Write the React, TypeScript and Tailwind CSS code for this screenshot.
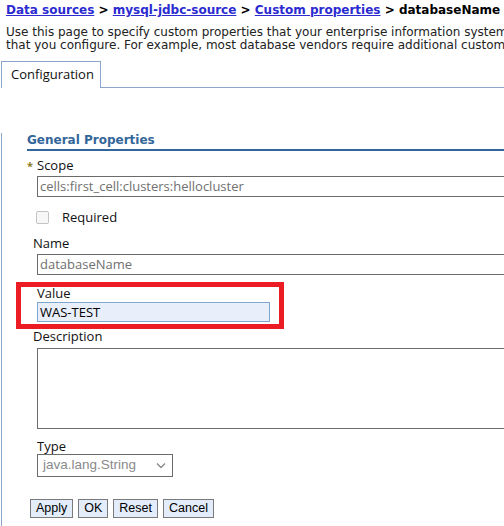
const verdana = "font-['DejaVu_Sans',Verdana,sans-serif]";
const segoe = "font-['Open_Sans','Noto_Sans',sans-serif]";
const arial = "font-['Liberation_Sans',Arial,sans-serif]";

const crumbs = ["Data sources", "mysql-jdbc-source", "Custom properties"];

const Label = ({ text, className = "leading-[17px]" }: { text: string; className?: string }) => (
  <div className={`${segoe} text-[13px] text-[#111] ${className}`}>{text}</div>
);

const App = () => (
  <div className="w-[504px] h-[526px] overflow-hidden bg-white">
    <div className="w-[820px]">
      {/* Breadcrumb */}
      <div className={`${verdana} h-[22px] pl-[6px] pt-[2px] text-[12px] leading-[16px] font-bold text-black whitespace-nowrap`}>
        {crumbs.map((c) => (
          <span key={c}>
            <a href="#" className="text-[#2b2bcf] underline">{c}</a>
            <span> &gt; </span>
          </span>
        ))}
        <span>databaseName</span>
      </div>

      <p className={`${verdana} mt-[4px] pl-[6px] text-[12px] leading-[13px] text-[#222] whitespace-nowrap`}>
        Use this page to specify custom properties that your enterprise information system (EIS) requires for the resource providers and resource factories
        <br />
        that you configure. For example, most database vendors require additional custom properties for data sources that access the database.
      </p>

      {/* Tabs */}
      <div className="mt-[9px] ml-[1px] flex h-[27px]">
        <div className={`${segoe} w-[100px] border-t border-l border-r border-[#8aa4cc] pl-[9px] pt-[4px] text-[13px] leading-[17px] text-[#111]`}>
          Configuration
        </div>
        <div className="flex-1 border-b border-[#8aa4cc]" />
      </div>

      {/* Panel */}
      <div className="ml-[1px] border-l border-[#8aa4cc] pb-[20px]">
        <div className={`${verdana} ml-[25px] mt-[45px] border-b-2 border-[#336699] pb-[1px] text-[12px] leading-[15px] font-bold text-[#336699]`}>
          General Properties
        </div>

        {/* Scope */}
        <div className="mt-[6px] ml-[25px] flex items-center h-[17px]">
          <span className="w-[10px] text-[11px] leading-[11px] text-[#8c7b26] font-bold">*</span>
          <Label text="Scope" />
        </div>
        <div className={`${segoe} mt-[2px] ml-[35px] h-[21px] border border-[#6b6b6b] pl-[2px] text-[13px] leading-[19px] text-[#707070]`}>
          cells:first_cell:clusters:hellocluster
        </div>

        {/* Required */}
        <div className="mt-[13px] ml-[34px] flex items-center h-[15px]">
          <span className="w-[13px] h-[13px] rounded-[2px] border border-[#c4c4c4] bg-[#f7f7f7]" />
          <span className={`${segoe} ml-[13px] text-[13px] leading-[17px] text-[#111]`}>Required</span>
        </div>

        {/* Name */}
        <Label text="Name" className="leading-[17px] mt-[10px] ml-[31px]" />
        <div className={`${segoe} mt-[2px] ml-[35px] h-[21px] border border-[#6b6b6b] pl-[2px] text-[13px] leading-[19px] text-[#707070]`}>
          databaseName
        </div>

        {/* Value, highlighted */}
        <div className="mt-[7px] ml-[14px] w-[268px] border-[5px] border-[#ec1c24] pl-[16px] pb-[2px]">
          <Label text="Value" className="leading-[13px]" />
          <div className={`${segoe} mt-[2px] w-[233px] h-[20px] border border-[#7fa6cf] bg-[#e8eefa] pl-[2px] text-[13px] leading-[18px] text-black`}>
            WAS-TEST
          </div>
        </div>

        {/* Description */}
        <Label text="Description" className="leading-[17px] -mt-[1px] ml-[31px]" />
        <div className="mt-[3px] ml-[35px] h-[81px] border border-[#6b6b6b]" />

        {/* Type */}
        <Label text="Type" className="leading-[15px] mt-[10px] ml-[35px]" />
        <div className={`${arial} ml-[35px] w-[136px] h-[23px] border border-[#6b6b6b] flex items-center justify-between pl-[5px] pr-[6px] text-[13.5px] text-[#8a8a8a]`}>
          <span>java.lang.String</span>
          <svg width="10" height="7" viewBox="0 0 10 7" fill="none" stroke="#8a8a8a" strokeWidth="1.4">
            <path d="M1 1.5 L5 5.5 L9 1.5" />
          </svg>
        </div>

        {/* Buttons */}
        <div className="mt-[22px] ml-[28px] flex gap-[5px]">
          {["Apply", "OK", "Reset", "Cancel"].map((b) => (
            <button
              key={b}
              className={`${arial} h-[19px] border border-[#7a7a7a] bg-[#e3ecfa] px-[5px] text-[12.5px] leading-[17px] text-black`}
            >
              {b}
            </button>
          ))}
        </div>
      </div>
    </div>
  </div>
);

export default App;
